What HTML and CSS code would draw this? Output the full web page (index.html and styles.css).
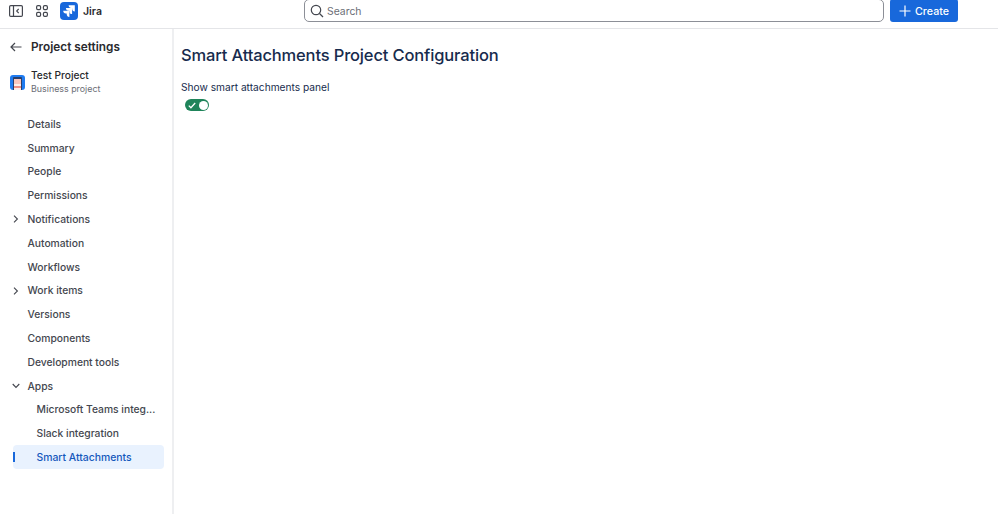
FILE: index.html
```html
<!DOCTYPE html>
<html lang="en">
<head>
<meta charset="utf-8">
<title>Smart Attachments Project Configuration</title>
<link rel="stylesheet" href="styles.css">
</head>
<body>
<header class="topbar">
  <div class="top-left">
    <svg class="ico-side" width="14" height="12" viewBox="0 0 14 12" fill="none" stroke="#44474f" stroke-width="1.2"><rect x=".6" y=".6" width="12.8" height="10.8" rx="1.2"/><path d="M4.5.6v10.8M9.7 3.8 7.7 6l2 2.2"/></svg>
    <svg class="ico-apps" width="12" height="12" viewBox="0 0 12 12" fill="none" stroke="#44474f" stroke-width="1.2"><rect x=".6" y=".6" width="4" height="4" rx="1.3"/><rect x="7.4" y=".6" width="4" height="4" rx="1.3"/><rect x=".6" y="7.4" width="4" height="4" rx="1.3"/><rect x="7.4" y="7.4" width="4" height="4" rx="1.3"/></svg>
    <span class="logo"><svg width="18" height="18" viewBox="0 0 18 18" fill="#fff"><path d="M8.6 3.2h6.2v6.2c-1.6 0-2.7-1-2.7-2.6v-.9h-.9c-1.5 0-2.6-1.1-2.6-2.7z"/><path d="M5.9 6h6.2v6.1c-1.6 0-2.7-1-2.7-2.6v-.8h-.9C7 8.700 5.900 7.600 5.900 6z"/><path d="M3.200 8.700h6.200V15c-1.600 0-2.700-1.100-2.700-2.700v-.9h-.9c-1.500 0-2.600-1.100-2.600-2.700z"/></svg></span>
    <span class="brand">Jira</span>
  </div>
  <div class="search">
    <svg width="14" height="14" viewBox="0 0 14 14" fill="none" stroke="#44474f" stroke-width="1.2"><circle cx="6" cy="6" r="4.700"/><path d="m9.500 9.500 3.500 3.500"/></svg>
    <span>Search</span>
  </div>
  <button class="create" type="button">
    <svg width="12" height="12" viewBox="0 0 12 12" stroke="#fff" stroke-width="1.200"><path d="M6 .5v11M.5 6h11"/></svg>
    Create
  </button>
</header>
<div class="shell">
  <nav class="sidebar">
    <div class="back-row">
      <svg width="12" height="10" viewBox="0 0 12 10" fill="none" stroke="#44474f" stroke-width="1.200"><path d="M11.500 5H1M5 1 1 5l4 4"/></svg>
      <span>Project settings</span>
    </div>
    <div class="project">
      <span class="avatar"><span class="phone"><i></i></span></span>
      <div class="project-text">
        <div class="project-name">Test Project</div>
        <div class="project-type">Business project</div>
      </div>
    </div>
    <ul class="menu">
      <li class="item">Details</li>
      <li class="item">Summary</li>
      <li class="item">People</li>
      <li class="item">Permissions</li>
      <li class="item"><svg class="chev" width="6" height="8" viewBox="0 0 6 8" fill="none" stroke="#44474f" stroke-width="1.100"><path d="m1 .7 3.400 3.300L1 7.300"/></svg>Notifications</li>
      <li class="item">Automation</li>
      <li class="item">Workflows</li>
      <li class="item"><svg class="chev" width="6" height="8" viewBox="0 0 6 8" fill="none" stroke="#44474f" stroke-width="1.100"><path d="m1 .7 3.400 3.300L1 7.300"/></svg>Work items</li>
      <li class="item">Versions</li>
      <li class="item">Components</li>
      <li class="item">Development tools</li>
      <li class="item"><svg class="chev chev-down" width="8" height="6" viewBox="0 0 8 6" fill="none" stroke="#44474f" stroke-width="1.100"><path d="M.7 1 4 4.400 7.300 1"/></svg>Apps</li>
      <li class="item sub">Microsoft Teams integ...</li>
      <li class="item sub">Slack integration</li>
      <li class="item sub active">Smart Attachments</li>
    </ul>
  </nav>
  <main class="content">
    <h1>Smart Attachments Project Configuration</h1>
    <p class="label">Show smart attachments panel</p>
    <span class="toggle">
      <svg width="8" height="7" viewBox="0 0 8 7" fill="none" stroke="#fff" stroke-width="1.300"><path d="m.8 3.600 2.100 2.100L7.200 1"/></svg>
      <span class="knob"></span>
    </span>
  </main>
</div>
</body>
</html>
```
FILE: styles.css
```css
* { box-sizing: border-box; }
html, body { margin: 0; height: 100%; }
body {
  font-family: Inter, "Liberation Sans", sans-serif;
  background: #fff;
  color: #292a2e;
  overflow: hidden;
}
.topbar {
  height: 29px;
  display: flex;
  align-items: flex-start;
  border-bottom: 1px solid #e4e5e8;
}
.top-left {
  width: 304px;
  height: 22px;
  display: flex;
  align-items: center;
  padding-left: 9px;
  flex: none;
}
.ico-apps { margin-left: 13px; }
.logo {
  width: 18px;
  height: 18px;
  margin-left: 12px;
  border-radius: 4px;
  background: #1868db;
  display: flex;
}
.brand {
  margin-left: 5px;
  font-size: 10.500px;
  font-weight: 600;
  color: #292a2e;
}
.search {
  width: 580px;
  height: 23px;
  margin-top: -1px;
  border: 1px solid #8c8f97;
  border-radius: 5px;
  display: flex;
  align-items: center;
  gap: 3px;
  padding: 1px 0 0 5px;
  font-size: 10.400px;
  color: #6b6e76;
}
.create {
  margin-left: 6px;
  margin-top: -1px;
  width: 68px;
  height: 23px;
  border: 0;
  border-radius: 3px;
  background: #1868db;
  color: #fff;
  font: 500 10.700px Inter, "Liberation Sans", sans-serif;
  display: flex;
  align-items: center;
  justify-content: center;
  gap: 4px;
  padding: 1px 0 0;
}
.shell {
  display: flex;
  height: 485px;
}
.sidebar {
  width: 174px;
  flex: none;
  border-right: 2px solid #eeeff1;
}
.back-row {
  height: 14px;
  margin-top: 11px;
  padding-left: 10px;
  display: flex;
  align-items: center;
  gap: 9px;
  font-size: 11.800px;
  font-weight: 600;
  color: #292a2e;
}
.project {
  display: flex;
  align-items: center;
  margin-top: 15px;
  padding-left: 10px;
  gap: 6px;
}
.avatar {
  width: 15px;
  height: 15px;
  border-radius: 3px;
  background: #1f7bf0;
  display: flex;
  justify-content: center;
  overflow: hidden;
  align-self: center;
}
.phone {
  width: 9px;
  height: 13px;
  margin-top: 2px;
  background: #2a3f6b;
  border-radius: 1px 1px 0 0;
  padding: 2px 1px 0;
  display: flex;
}
.phone i {
  display: block;
  flex: 1;
  background: linear-gradient(#f9c6bd 0 45%, #fdeeea 45% 60%, #ef8f85 60% 80%, #fdeeea 80%);
}
.project-name {
  font-size: 10.200px;
  font-weight: 500;
  line-height: 13px;
  color: #292a2e;
}
.project-type {
  font-size: 8.900px;
  line-height: 13px;
  color: #6b6e76;
}
.menu {
  list-style: none;
  margin: 17px 0 0;
  padding: 0;
}
.item {
  position: relative;
  height: 23.800px;
  margin-left: 13px;
  margin-right: 9px;
  padding-left: 14.500px;
  display: flex;
  align-items: center;
  font-size: 10.300px;
  font-weight: 500;
  color: #44474f;
  border-radius: 4px;
  white-space: nowrap;
}
.chev {
  position: absolute;
  left: 0;
  top: 8px;
}
.chev-down {
  left: -1px;
  top: 9px;
}
.sub { padding-left: 23.500px; }
.active {
  margin-right: 8px;
  font-size: 10.400px;
  background: #e9f2fe;
  color: #1558bc;
}
.active::before {
  content: "";
  position: absolute;
  left: 0;
  top: 7px;
  width: 2px;
  height: 10px;
  background: #1868db;
}
.content {
  flex: 1;
  padding: 16px 0 0 7px;
}
h1 {
  margin: 0;
  font-size: 16.500px;
  line-height: 21px;
  font-weight: 500;
  letter-spacing: -0.150px;
  color: #172b4d;
}
.label {
  margin: 14px 0 0;
  font-size: 10.200px;
  line-height: 14px;
  color: #172b4d;
}
.toggle {
  margin: 5px 0 0 4px;
  width: 24px;
  height: 12px;
  border-radius: 6px;
  background: #1f845a;
  display: flex;
  align-items: center;
  justify-content: space-between;
  padding: 0 1.500px 0 3px;
}
.knob {
  width: 9px;
  height: 9px;
  border-radius: 50%;
  background: #fff;
}
```
